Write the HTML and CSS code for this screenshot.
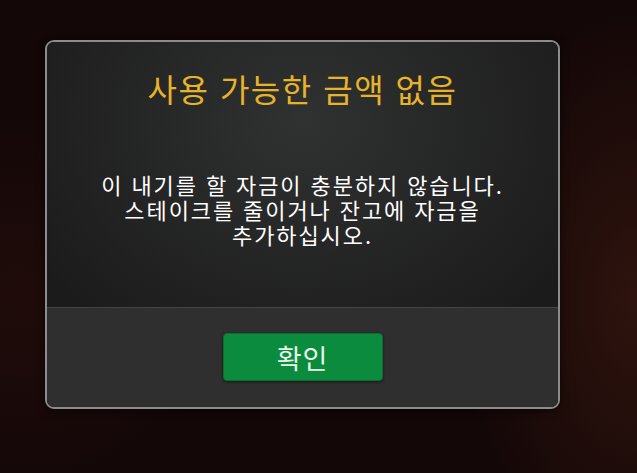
FILE: index.html
```html
<!DOCTYPE html>
<html lang="ko">
<head>
    <meta charset="UTF-8">
    <meta name="viewport" content="width=device-width, initial-scale=1.0">
    <title>사용 가능한 금액 없음</title>
    <link rel="stylesheet" href="styles.css">
</head>
<body>
    <div class="dialog">
        <div class="dialog-body">
            <h2 class="dialog-title">사용 가능한 금액 없음</h2>
            <p class="dialog-text">이 내기를 할 자금이 충분하지 않습니다.<br>스테이크를 줄이거나 잔고에 자금을<br>추가하십시오.</p>
        </div>
        <div class="dialog-footer">
            <button class="ok-button">확인</button>
        </div>
    </div>
</body>
</html>
```

FILE: styles.css
```css
html, body {
    height: 100%;
}
body {
    margin: 0;
    font-family: "Noto Sans CJK KR", "Noto Sans", sans-serif;
    background:
        radial-gradient(ellipse 180px 300px at 640px 300px, rgba(70,30,20,0.55), transparent),
        radial-gradient(ellipse 200px 200px at 20px 300px, rgba(50,20,15,0.4), transparent),
        #130707;
    overflow: hidden;
}
.dialog {
    width: 511px;
    margin: 40px 0 0 45px;
    border: 2px solid #8c8c8c;
    border-radius: 9px;
    overflow: hidden;
    box-shadow: 0 2px 8px rgba(0,0,0,0.6);
}
.dialog-body {
    height: 266px;
    box-sizing: border-box;
    padding-top: 24px;
    text-align: center;
    background: radial-gradient(ellipse 320px 260px at 50% 30%, #303131, #1b1b1b);
    border-bottom: 1px solid #454545;
}
.dialog-title {
    margin: 0;
    font-size: 32px;
    font-weight: 400;
    line-height: 44px;
    letter-spacing: 1.5px;
    color: #e6b42a;
}
.dialog-text {
    margin: 62px 0 0;
    font-size: 22px;
    line-height: 25px;
    letter-spacing: 1.9px;
    color: #ffffff;
}
.dialog-footer {
    height: 99px;
    display: flex;
    justify-content: center;
    padding-top: 25px;
    box-sizing: border-box;
    background: #2f2f30;
}
.ok-button {
    width: 160px;
    height: 48px;
    border: 1px solid #0c6e30;
    border-radius: 4px;
    background: #0a8b3d;
    color: #eaf6ea;
    font-family: inherit;
    font-size: 27px;
    line-height: 1;
    letter-spacing: 1px;
    box-shadow: 0 1px 3px rgba(0,0,0,0.5);
}
```
